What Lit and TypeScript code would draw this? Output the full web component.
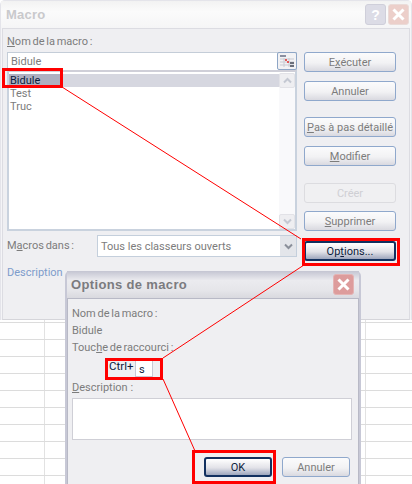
import { LitElement, html, css, svg } from "lit";
import { customElement } from "lit/decorators.js";

const chevron = (up: boolean) => svg`<svg class="chev" width="9" height="7" viewBox="0 0 9 7"><path d="${up ? "M1 5.5 4.5 2 8 5.5" : "M1 1.5 4.5 5 8 1.5"}" fill="none" stroke="currentColor" stroke-width="2"/></svg>`;
const closeX = svg`<svg width="13" height="13" viewBox="0 0 13 13"><path d="M1.5 1.5 11.5 11.5M11.5 1.5 1.5 11.5" stroke="#fff" stroke-width="3" fill="none"/></svg>`;

@customElement("app-root")
export class AppRoot extends LitElement {
  static styles = css`
    :host { display: block; position: relative; width: 412px; height: 484px; overflow: hidden;
      font-family: Roboto, "Liberation Sans", Arial, sans-serif; font-size: 11px; color: #7c7c7c;
      background-color: #fff;
      background-image:
        linear-gradient(to bottom, #dcdcdc 1px, transparent 1px),
        linear-gradient(to right, #e2e2e2 1px, transparent 1px);
      background-size: 100% 17px, 321px 100%;
      background-position: 0 322px, 44px 0; }
    u { text-decoration-thickness: 1px; text-underline-offset: 1px; }
    .window { position: absolute; box-sizing: border-box; display: flex; flex-direction: column; }
    .macro { left: 0; top: 0; width: 412px; height: 320px; background: #f4f4f7; border: 1px solid #e4e4ea; border-bottom: 0; border-radius: 5px 5px 0 0; }
    .titlebar { display: flex; align-items: center; justify-content: space-between; flex: none; }
    .macro .titlebar { height: 27px; padding: 0 2px 0 5px; background: linear-gradient(#f2f2f2, #fbfbfb 40%, #f5f5f6); }
    .macro h1 { margin: 0; font: bold 13px "Liberation Sans", sans-serif; color: #c9c9cc; letter-spacing: .2px; }
    .winbtns { display: flex; gap: 2px; }
    .wb { width: 21px; height: 21px; box-sizing: border-box; border-radius: 3px; display: flex; align-items: center; justify-content: center; }
    .help { background: #dcdce6; border: 1px solid #cfcfda; color: #fff; font: bold 14px "Liberation Sans", sans-serif; }
    .close { background: #eccfca; border: 1px solid #eadbd8; }
    .macro .body { flex: 1; margin: 0 1px; display: flex; padding: 6px 0 0 4px; background: #efeff2; border: 1px solid #dcdce2; border-bottom: 1px solid #d5d5da; box-sizing: border-box; }
    .left { width: 290px; display: flex; flex-direction: column; }
    .lbl { height: 14px; line-height: 14px; white-space: nowrap; word-spacing: -1px; }
    .nameinput { margin-top: 3px; height: 18px; display: flex; background: #fff; border: 1px solid #c4cdd8; box-sizing: border-box; border-bottom: 0; }
    .nameinput span { flex: 1; padding-left: 3px; line-height: 17px; }
    .picker { width: 20px; height: 18px; margin: -1px -1px 0 0; box-sizing: border-box; border: 1px solid #8ea6c6; border-radius: 2px; background: #f2f2f4; display: flex; align-items: center; justify-content: center; }
    .list { height: 161px; box-sizing: border-box; background: #fff; border: 2px solid #c9d2de; border-top-color: #cfcfd8; display: flex; padding: 2px 0 0 0; }
    .rows { flex: 1; display: flex; flex-direction: column; }
    .row { height: 13px; line-height: 13px; padding-left: 1px; }
    .row.sel { height: 13px; color: #0c1c3c; background: linear-gradient(to right, #aeb0c0 0 53px, #d6d7e0 53px); }
    .scroll { width: 16px; margin-top: -1px; display: flex; flex-direction: column; justify-content: space-between; background: #f9f9fb; color: #c4c8d2; }
    .sb { height: 15px; background: #eeeef1; border: 1px solid #e2e2e7; border-radius: 2px; box-sizing: border-box; display: flex; align-items: center; justify-content: center; }
    .indoc { margin-top: 4px; height: 22px; display: flex; align-items: center; }
    .indoc .lbl { width: 90px; }
    .select { flex: 1; height: 22px; display: flex; align-items: center; justify-content: space-between; box-sizing: border-box; border: 1px solid #c4cfdc; background: #fff; padding-left: 3px; }
    .drop { width: 16px; height: 20px; background: #e3e5ea; color: #8a8f9a; display: flex; align-items: center; justify-content: center; }
    .desc { margin-top: 9px; height: 14px; line-height: 14px; color: #7d9ccb; }
    .right { margin-left: 7px; width: 92px; padding-top: 17px; display: flex; flex-direction: column; }
    .btn { box-sizing: border-box; height: 20px; flex: none; border: 1px solid #8fa8cc; border-radius: 3px; background: linear-gradient(#fbfbfc, #f2f2f4 55%, #d9d9e0); display: flex; align-items: center; justify-content: center; white-space: nowrap; }
    .btn.off { border-color: #dcdce0; background: #f0f0f2; color: #cfcfd4; }
    .btn.hot { border: 2px solid #12305f; color: #0c1c3c; background: linear-gradient(#fff, #e2e2e8 55%, #9ea6bd); border-radius: 3px; }
    .m8 { margin-top: 8px; } .m9 { margin-top: 9px; } .m10 { margin-top: 10px; } .m16 { margin-top: 16px; } .m17 { margin-top: 17px; }
    .options { left: 65px; top: 271px; width: 296px; height: 230px; background: #c7c8d6; border-radius: 5px 5px 0 0; padding: 0 2px; }
    .options .titlebar { height: 27px; padding: 0 4px 0 4px; background: linear-gradient(#c4c5d2, #ebebef 35%, #e6e6ea 70%, #d9d9df); }
    .options h2 { margin: 0; font: bold 13px "Liberation Sans", sans-serif; color: #7b7b7f; letter-spacing: .35px; }
    .options .close { background: #dd9c9c; border-color: #e4b4b4; margin-right: 1px; }
    .options .body { flex: 1; background: #efeff2; padding: 6px 8px 0 4px; display: flex; flex-direction: column; border: 1px solid #b8b9c6; border-bottom: 0; box-sizing: border-box; }
    .opt { height: 17px; line-height: 17px; word-spacing: -1px; }
    .keyrow { display: flex; margin: 4px 0 0 37px; height: 18px; align-items: flex-start; color: #0c1c3c; }
    .keyrow b { font-weight: normal; width: 26px; line-height: 13px; font-size: 11.5px; }
    .key { width: 18px; height: 17px; box-sizing: border-box; background: #fff; border: 1px solid #c8c8d4; padding-left: 3px; line-height: 17px; }
    .lbl2 { margin-top: 3px; height: 14px; line-height: 14px; }
    .area { margin-top: 3px; height: 42px; width: 280px; box-sizing: border-box; background: #fff; border: 1px solid #cfcfd6; }
    .actions { margin: 17px 2px 0 132px; display: flex; gap: 10px; }
    .actions .btn { width: 68px; }
    .red { position: absolute; box-sizing: border-box; border: 3px solid #f00; pointer-events: none; }
    .r1 { left: 2px; top: 68px; width: 61px; height: 20px; }
    .r2 { left: 302px; top: 238px; width: 98px; height: 28px; }
    .r3 { left: 105px; top: 358px; width: 58px; height: 22px; }
    .r4 { left: 192px; top: 450px; width: 84px; height: 34px; }
    .lines { position: absolute; left: 0; top: 0; pointer-events: none; }
  `;

  private btn(label: unknown, cls = "") {
    return html`<div class="btn ${cls}">${label}</div>`;
  }

  render() {
    return html`
      <section class="window macro">
        <div class="titlebar">
          <h1>Macro</h1>
          <div class="winbtns">
            <div class="wb help">?</div>
            <div class="wb close">${closeX}</div>
          </div>
        </div>
        <div class="body">
          <div class="left">
            <div class="lbl"><u>N</u>om de la macro :</div>
            <div class="nameinput">
              <span>Bidule</span>
              <div class="picker">
                <svg width="16" height="14" viewBox="0 0 16 14">
                  <path d="M1 1h6v2H1z" fill="#8a8fa0"/>
                  <path d="M1 5h14M1 8h14M1 11h14M5 4v9M10 4v9" stroke="#c8cad2" fill="none"/>
                  <path d="M6 5h2v2H6zM8 7h2v2H8z" fill="#e05a5a"/>
                  <path d="M11 8h4v2h-4zM11 11h4v2h-4z" fill="#6a6e7a"/>
                </svg>
              </div>
            </div>
            <div class="list">
              <div class="rows">
                <div class="row sel">Bidule</div>
                <div class="row">Test</div>
                <div class="row">Truc</div>
              </div>
              <div class="scroll">
                <div class="sb">${chevron(true)}</div>
                <div class="sb">${chevron(false)}</div>
              </div>
            </div>
            <div class="indoc">
              <div class="lbl">M<u>a</u>cros dans :</div>
              <div class="select"><span>Tous les classeurs ouverts</span><div class="drop">${chevron(false)}</div></div>
            </div>
            <div class="desc">Description</div>
          </div>
          <div class="right">
            ${this.btn(html`E<u>x</u>écuter`)}
            ${this.btn("Annuler", "m9")}
            ${this.btn(html`<u>P</u>as à pas détaillé`, "m16")}
            ${this.btn(html`<u>M</u>odifier`, "m9")}
            ${this.btn("Créer", "off m17")}
            ${this.btn(html`<u>S</u>upprimer`, "m8")}
            ${this.btn(html`Op<u>t</u>ions...`, "hot m10")}
          </div>
        </div>
      </section>

      <section class="window options">
        <div class="titlebar">
          <h2>Options de macro</h2>
          <div class="wb close">${closeX}</div>
        </div>
        <div class="body">
          <div class="opt">Nom de la macro :</div>
          <div class="opt">Bidule</div>
          <div class="opt">Touc<u>h</u>e de raccourci :</div>
          <div class="keyrow"><b>Ctrl+</b><div class="key">s</div></div>
          <div class="lbl2"><u>D</u>escription :</div>
          <div class="area"></div>
          <div class="actions">
            ${this.btn("OK", "hot")}
            ${this.btn("Annuler")}
          </div>
        </div>
      </section>

      <svg class="lines" width="412" height="484" viewBox="0 0 412 484">
        <path d="M62 87 301 239M304 265 163 358M163 379 195 451" fill="none" stroke="#f00" stroke-width="1"/>
      </svg>
      <div class="red r1"></div>
      <div class="red r2"></div>
      <div class="red r3"></div>
      <div class="red r4"></div>
    `;
  }
}
